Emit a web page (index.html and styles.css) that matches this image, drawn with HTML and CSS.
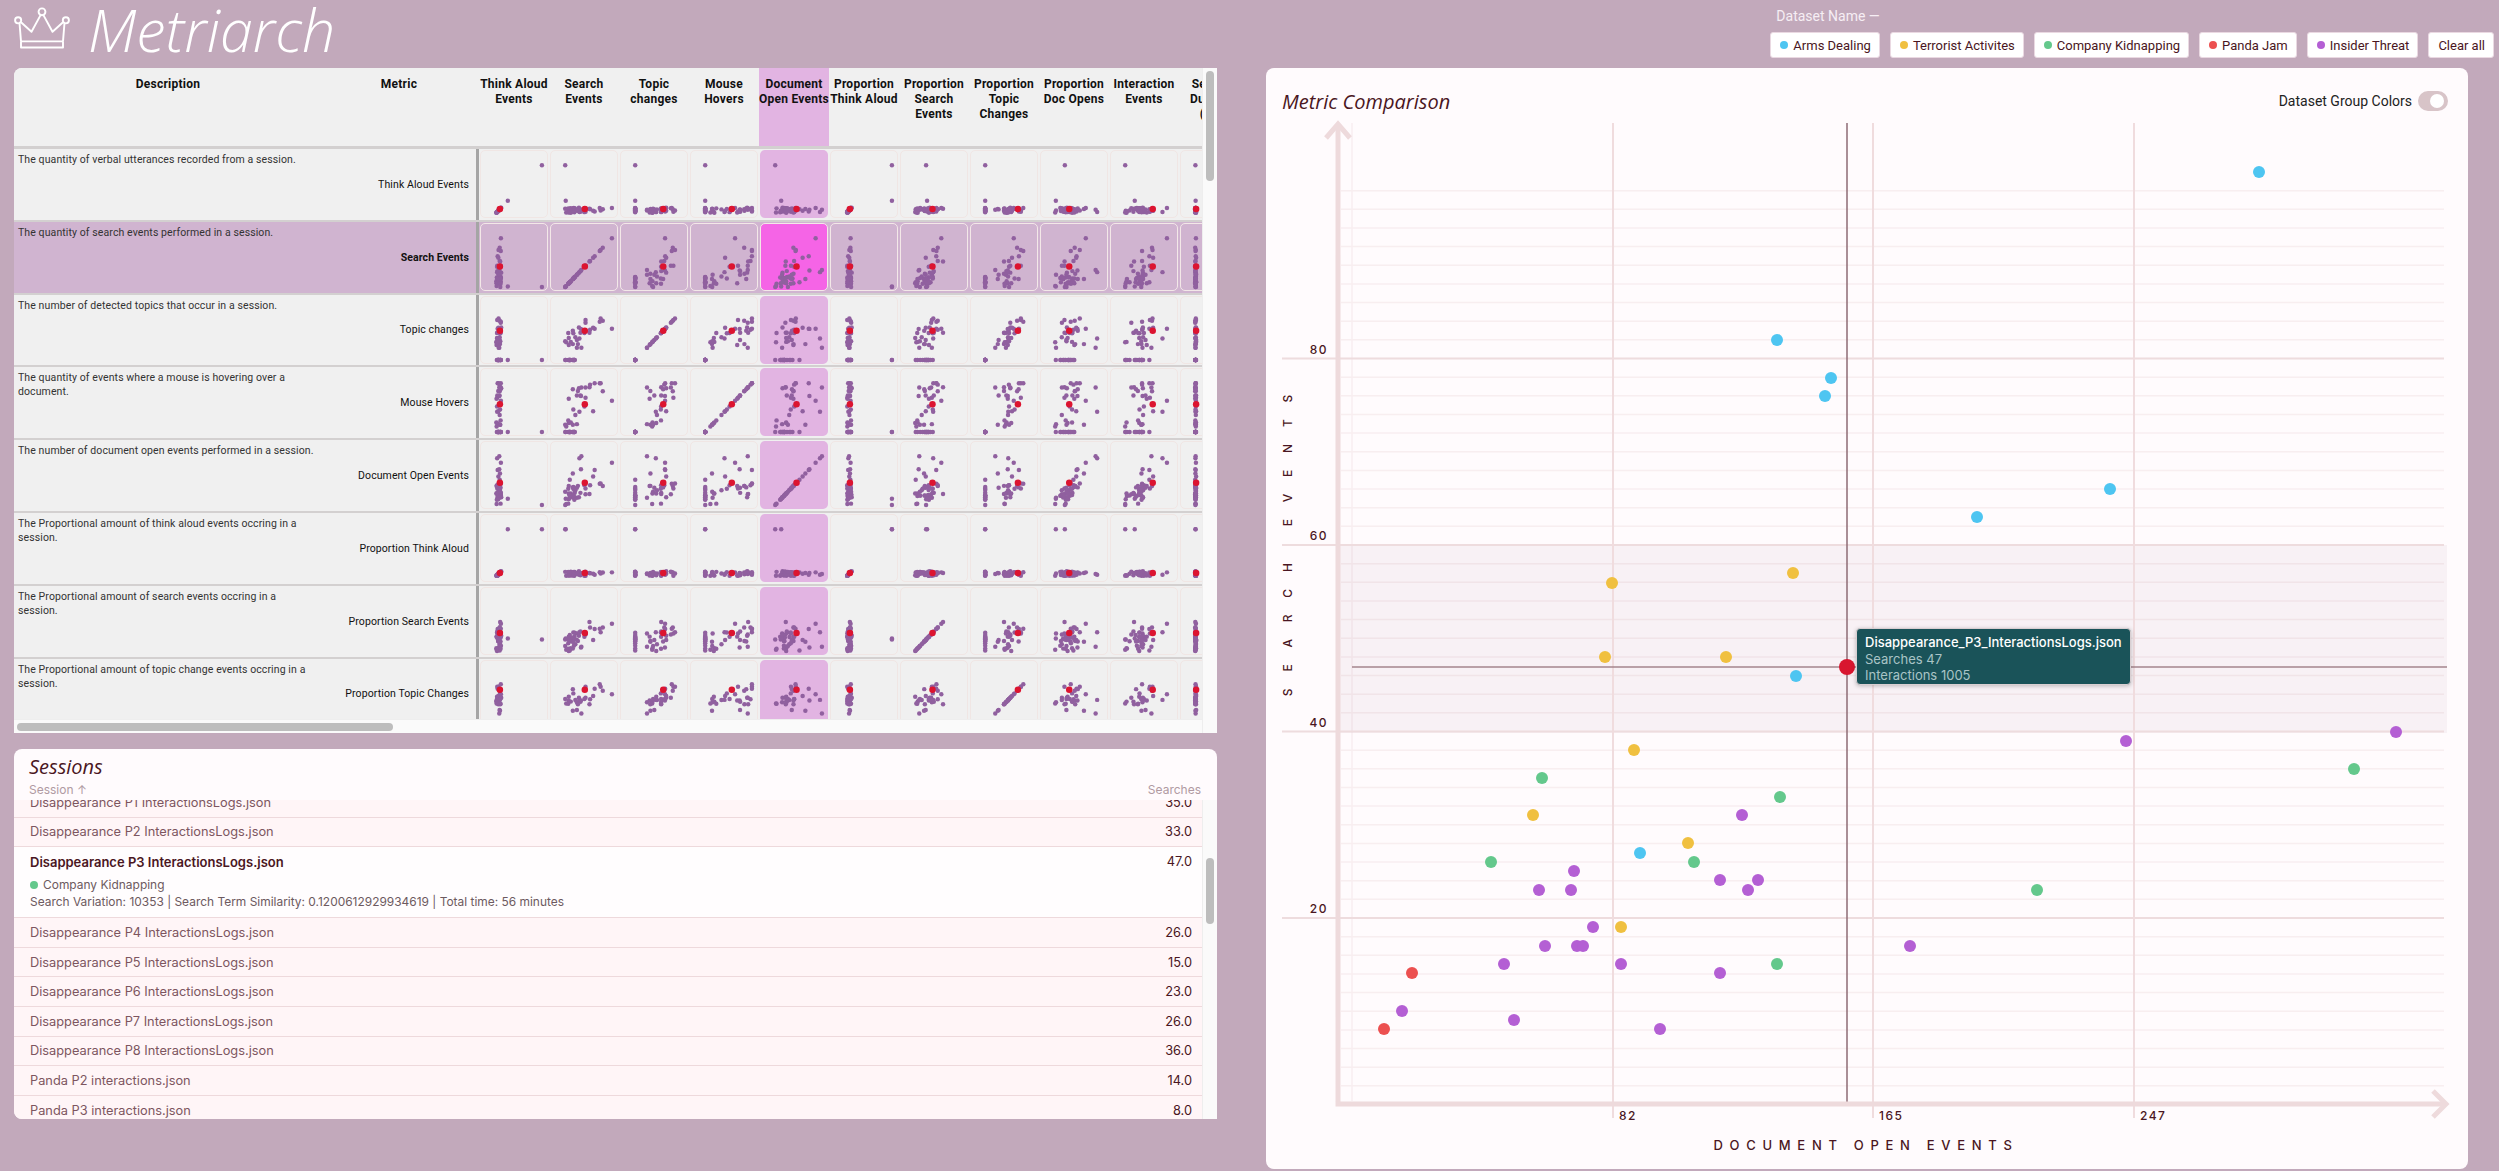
FILE: index.html
```html
<!DOCTYPE html>
<html lang="en">
<head>
    <meta charset="UTF-8">
    <title>Metriarch</title>
    <link rel="stylesheet" href="styles.css">
</head>
<body>
    <header class="top-bar">
        <div class="brand">
            <svg class="crown" viewBox="0 0 60 44" fill="none" stroke="#fff" stroke-width="2" stroke-linejoin="round">
                <circle cx="30" cy="5" r="3.6"/>
                <circle cx="5" cy="14" r="3.2"/>
                <circle cx="55" cy="14" r="3.2"/>
                <path d="M8 36 L6.5 17.5 M52 36 L53.5 17.5 M8 16 L19 26 L28.5 8.5 M31.5 8.5 L41 26 L52 16"/>
                <path d="M8 36 H52 M8 36 V42.5 H52 V36"/>
            </svg>
            <span class="brand-name">Metriarch</span>
        </div>
        <div class="datasets">
            <div class="datasets-label">Dataset Name —</div>
            <div class="chips">
                <div class="chip"><i class="dot blue"></i>Arms Dealing</div>
                <div class="chip"><i class="dot yellow"></i>Terrorist Activites</div>
                <div class="chip"><i class="dot green"></i>Company Kidnapping</div>
                <div class="chip"><i class="dot red"></i>Panda Jam</div>
                <div class="chip"><i class="dot purple"></i>Insider Threat</div>
                <div class="chip">Clear all</div>
            </div>
        </div>
    </header>

    <main class="layout">
        <div class="left-col">
            <section class="card matrix-card">
                <div class="matrix" id="matrix"></div>
                <div class="track vtrack"><div class="thumb matrix-vthumb"></div></div>
                <div class="track htrack"><div class="thumb matrix-hthumb"></div></div>
            </section>

            <section class="card sessions-card">
                <div class="sessions-head">
                    <h2 class="panel-title">Sessions</h2>
                    <div class="sessions-cols"><span>Session ↑</span><span>Searches</span></div>
                </div>
                <div class="sessions-body">
                    <div class="session-list">
                        <div class="session-row"><span>Disappearance P1 InteractionsLogs.json</span><span class="num">35.0</span></div>
                        <div class="session-row"><span>Disappearance P2 InteractionsLogs.json</span><span class="num">33.0</span></div>
                        <div class="session-row open">
                            <div class="session-detail">
                                <div class="session-name">Disappearance P3 InteractionsLogs.json</div>
                                <div class="session-group"><i class="dot green"></i>Company Kidnapping</div>
                                <div>Search Variation: 10353 | Search Term Similarity: 0.1200612929934619 | Total time: 56 minutes</div>
                            </div>
                            <span class="num">47.0</span>
                        </div>
                        <div class="session-row"><span>Disappearance P4 InteractionsLogs.json</span><span class="num">26.0</span></div>
                        <div class="session-row"><span>Disappearance P5 InteractionsLogs.json</span><span class="num">15.0</span></div>
                        <div class="session-row"><span>Disappearance P6 InteractionsLogs.json</span><span class="num">23.0</span></div>
                        <div class="session-row"><span>Disappearance P7 InteractionsLogs.json</span><span class="num">26.0</span></div>
                        <div class="session-row"><span>Disappearance P8 InteractionsLogs.json</span><span class="num">36.0</span></div>
                        <div class="session-row"><span>Panda P2 interactions.json</span><span class="num">14.0</span></div>
                        <div class="session-row"><span>Panda P3 interactions.json</span><span class="num">8.0</span></div>
                    </div>
                    <div class="track sessions-track"><div class="thumb sessions-thumb"></div></div>
                </div>
            </section>
        </div>

        <section class="card chart-card">
            <div class="chart-head">
                <h2 class="panel-title">Metric Comparison</h2>
                <div class="group-toggle">Dataset Group Colors<span class="switch"><span class="knob"></span></span></div>
            </div>
            <svg class="big-chart" id="bigChart" viewBox="1266 120 1202 1049"></svg>
            <div class="chart-tip">
                <div class="tip-title">Disappearance_P3_InteractionsLogs.json</div>
                <div>Searches 47</div>
                <div>Interactions 1005</div>
            </div>
        </section>
    </main>

    <script src="charts.js"></script>
</body>
</html>
```

FILE: styles.css
```css
* {
    box-sizing: border-box;
}
body {
    margin: 0;
    height: 1171px;
    overflow: hidden;
    background-color: #c2a9bb;
    font-family: Inter, "Liberation Sans", sans-serif;
    color: #4a1622;
}
.top-bar {
    height: 68px;
    display: flex;
    justify-content: space-between;
    padding: 0 5px 0 13px;
}
.brand {
    display: flex;
    align-items: flex-start;
}
.crown {
    width: 58px;
    height: 42px;
    margin-top: 7px;
}
.brand-name {
    margin-left: 17px;
    font-family: "Open Sans", sans-serif;
    font-weight: 300;
    font-style: italic;
    font-size: 59px;
    line-height: 58px;
    color: #fff;
}
.datasets-label {
    margin: 8px 0 8px 6px;
    font-family: Roboto, sans-serif;
    font-size: 14px;
    line-height: 16px;
    color: #f6eef4;
}
.chips {
    display: flex;
    gap: 10px;
}
.chip {
    height: 26px;
    display: flex;
    align-items: center;
    padding: 0 8px 0 9px;
    background: #fff;
    border: 1px solid #ead9e2;
    border-radius: 3px;
    font-family: Roboto, sans-serif;
    font-size: 13px;
}
.dot {
    display: inline-block;
    width: 8px;
    height: 8px;
    border-radius: 50%;
    margin-right: 5px;
}
.blue { background: #4ec5f1; }
.yellow { background: #f0c040; }
.green { background: #64c88c; }
.red { background: #ec5050; }
.purple { background: #b45fd4; }

.layout {
    display: grid;
    grid-template-columns: 1203px 1202px;
    gap: 49px;
    padding-left: 14px;
}
.left-col {
    display: flex;
    flex-direction: column;
    gap: 16px;
}
.card {
    background: #fffbfd;
    border-radius: 8px 8px 0 8px;
    overflow: hidden;
}
.panel-title {
    margin: 0;
    font-family: "Open Sans", sans-serif;
    font-weight: 400;
    font-style: italic;
    font-size: 20px;
    color: #4a1622;
}

/* scatter matrix */
.matrix-card {
    height: 665px;
    display: grid;
    grid-template-columns: 1188px 15px;
    grid-template-rows: 651px 14px;
    border-radius: 8px 0 0 0;
    background: #fafafa;
}
.matrix {
    overflow: hidden;
    background: #f0f0f0;
}
.matrix-row {
    display: grid;
    grid-template-columns: 308px 154px 3px repeat(11, 70px);
    height: 72.8px;
    border-bottom: 2px solid #d3d0d0;
    font-family: Roboto, sans-serif;
    font-size: 10.5px;
    letter-spacing: 0.1px;
    color: #333;
}
.matrix-head {
    height: 81px;
    border-bottom: 3px solid #d3d0d0;
    font-size: 12px;
    letter-spacing: 0.25px;
    font-weight: 700;
    color: #111;
    text-align: center;
    line-height: 15px;
}
.head-cell {
    padding-top: 9px;
}
.head-cell.active {
    background: #e2b4e2;
}
.row-desc {
    padding: 4px;
    line-height: 14px;
}
.row-name {
    padding-right: 7px;
    text-align: right;
    align-self: center;
    color: #111;
}
.row-bar {
    background: #a5a5a5;
}
.matrix-row.selected {
    background: #d0b4d0;
}
.matrix-row.selected .row-name {
    font-weight: 700;
}
.plot {
    margin: 1px;
    height: 68px;
    border: 1.5px solid #f0e6e4;
    border-radius: 5px;
}
.plot svg {
    display: block;
    width: 100%;
    height: 100%;
}
.selected .plot {
    border-color: #f3e8e8;
}
.plot.active {
    background: #e2b4e2;
    border-color: transparent;
}
.selected .plot.active {
    background: #f564e6;
    border-color: #f3e8e8;
}

.track {
    background: #fafafa;
    position: relative;
}
.vtrack {
    grid-row: 1 / span 2;
    grid-column: 2;
    border-left: 1px solid #eee;
}
.htrack {
    border-top: 1px solid #eee;
}
.thumb {
    position: absolute;
    background: #bdbdbd;
    border-radius: 4px;
}
.matrix-vthumb {
    left: 3px;
    top: 3px;
    width: 8px;
    height: 110px;
}
.matrix-hthumb {
    left: 3px;
    top: 3px;
    width: 376px;
    height: 8px;
}

/* sessions list */
.sessions-card {
    height: 370px;
    border-radius: 8px 8px 0 8px;
}
.sessions-head {
    height: 51px;
    padding: 4px 16px 0 15px;
}
.sessions-cols {
    display: flex;
    justify-content: space-between;
    font-size: 12px;
    line-height: 15px;
    color: #b09aa2;
    margin-top: 2px;
}
.sessions-body {
    height: 319px;
    display: grid;
    grid-template-columns: 1188px 15px;
    overflow: hidden;
}
.session-list {
    margin-top: -12px;
    background: #fff5f7;
    font-size: 12.8px;
    color: #7d5560;
}
.session-row {
    min-height: 29.6px;
    display: flex;
    justify-content: space-between;
    align-items: center;
    padding: 0 10px 0 16px;
    border-bottom: 1px solid #eed9dc;
}
.num {
    color: #4a1622;
}
.session-row.open {
    min-height: 71px;
    align-items: flex-start;
    padding-top: 6px;
    background: #fffdfe;
    font-size: 11.95px;
    line-height: 17px;
    color: #6d5a60;
}
.session-row.open .num {
    font-size: 12.8px;
    line-height: 18px;
}
.session-name {
    font-size: 13px;
    font-weight: 600;
    line-height: 18px;
    color: #4a1622;
    margin-bottom: 5px;
}
.session-group {
    display: flex;
    align-items: center;
}
.sessions-track {
    border-left: 1px solid #eee;
}
.sessions-thumb {
    left: 3px;
    top: 58px;
    width: 8px;
    height: 66px;
}

/* big scatter */
.chart-card {
    position: relative;
    height: 1101px;
    border-radius: 8px;
}
.chart-head {
    height: 52px;
    display: flex;
    justify-content: space-between;
    align-items: flex-start;
    padding: 20px 20px 0 16px;
}
.group-toggle {
    display: flex;
    align-items: center;
    font-family: Roboto, sans-serif;
    font-size: 14px;
    color: #222;
    gap: 6px;
    margin-top: 3px;
}
.switch {
    width: 30px;
    height: 20px;
    border-radius: 10px;
    background: #d8c4c8;
    display: flex;
    justify-content: flex-end;
    align-items: center;
    padding-right: 4px;
}
.knob {
    width: 14px;
    height: 14px;
    border-radius: 50%;
    background: #fff;
}
.big-chart {
    display: block;
    width: 1202px;
    height: 1049px;
}
.big-chart text {
    font-family: Inter, "Liberation Sans", sans-serif;
    fill: #4a1622;
    font-size: 12px;
    font-weight: 500;
}
.big-chart .tick {
    letter-spacing: 1.5px;
}
.big-chart .axis-x {
    letter-spacing: 6.7px;
    font-size: 13px;
}
.big-chart .axis-y {
    letter-spacing: 16.8px;
}
.chart-tip {
    position: absolute;
    left: 590px;
    top: 560px;
    width: 275px;
    height: 57px;
    padding: 4px 8px;
    background: #1a5359;
    border: 1px solid #d9cfd2;
    border-radius: 4px;
    box-shadow: 0 1px 4px rgba(0,0,0,0.25);
    font-size: 13px;
    line-height: 16px;
    color: #a9c4c6;
}
.tip-title {
    font-size: 13px;
    font-weight: 500;
    line-height: 18px;
    color: #fff;
}
```

FILE: charts.js
```js
// session positions on the big chart, in page pixels
const groups = {
    '#4ec5f1': [[2259,172],[1777,340],[1831,378],[1825,396],[2110,489],[1977,517],[1796,676],[1640,853]],
    '#f0c040': [[1793,573],[1612,583],[1726,657],[1605,657],[1634,750],[1533,815],[1688,843],[1621,927]],
    '#64c88c': [[1542,778],[1780,797],[2354,769],[1491,862],[1694,862],[2037,890],[1777,964]],
    '#b45fd4': [[2126,741],[2396,732],[1742,815],[1574,871],[1539,890],[1571,890],[1720,880],[1758,880],[1748,890],
                [1593,927],[1545,946],[1577,946],[1583,946],[1910,946],[1504,964],[1621,964],[1720,973],[1402,1011],[1514,1020],[1660,1029]],
    '#ec5050': [[1412,973],[1384,1029]]
};

const metrics = [
    { key: 'think', name: 'Think Aloud Events', desc: 'The quantity of verbal utterances recorded from a session.' },
    { key: 'search', name: 'Search Events', desc: 'The quantity of search events performed in a session.' },
    { key: 'topic', name: 'Topic changes', desc: 'The number of detected topics that occur in a session.' },
    { key: 'mouse', name: 'Mouse Hovers', desc: 'The quantity of events where a mouse is hovering over a document.' },
    { key: 'doc', name: 'Document Open Events', desc: 'The number of document open events performed in a session.' },
    { key: 'pthink', name: 'Proportion Think Aloud', desc: 'The Proportional amount of think aloud events occring in a session.' },
    { key: 'psearch', name: 'Proportion Search Events', desc: 'The Proportional amount of search events occring in a session.' },
    { key: 'ptopic', name: 'Proportion Topic Changes', desc: 'The Proportional amount of topic change events occring in a session.' },
    { key: 'pdoc', name: 'Proportion Doc Opens' },
    { key: 'inter', name: 'Interaction Events' },
    { key: 'dur', name: 'Session Duration (sec)' }
];

let seed = 7;
function rnd() {
    seed = (seed * 16807) % 2147483647;
    return seed / 2147483647;
}
function clamp(v) {
    return Math.max(0, Math.min(1, v));
}
function noise(a) {
    return (rnd() - 0.5) * 2 * a;
}

// the other metrics only follow the two plotted ones loosely
function makeSession(x, y) {
    const doc = (x - 1384) / 1012;
    const search = (1029 - y) / 857;
    const none = search < 0.25 && rnd() < 0.65;
    const topic = none ? 0 : clamp(0.3 + 0.6 * search + noise(0.26));
    const think = 0.02 + rnd() * 0.11;
    return {
        doc, search, topic, think,
        mouse: none ? 0 : clamp(0.45 + 0.35 * search + noise(0.38)),
        pthink: clamp(think * 0.9 + rnd() * 0.03),
        psearch: clamp(0.1 + 0.9 * search / (doc + 0.45) * 0.55 + noise(0.18)),
        ptopic: none ? 0 : clamp(0.12 + 0.75 * topic + noise(0.16)),
        pdoc: clamp(0.06 + 0.75 * doc + noise(0.16)),
        inter: clamp(0.06 + 0.5 * doc + 0.3 * search + noise(0.2)),
        dur: 0.02 * rnd()
    };
}

const sessions = [];
Object.keys(groups).forEach(function(color) {
    groups[color].forEach(function(p) {
        sessions.push(makeSession(p[0], p[1]));
    });
});
// the two outliers on think aloud
Object.assign(sessions[sessions.length - 1], { think: 1, pthink: 1 });
Object.assign(sessions[sessions.length - 4], { think: 0.27, pthink: 1 });

const current = { doc: 0.457, search: 0.42, topic: 0.6, think: 0.1, mouse: 0.57, pthink: 0.1,
    psearch: 0.37, ptopic: 0.7, pdoc: 0.3, inter: 0.59, dur: 0.02 };

function plotMarkup(colKey, rowKey) {
    const px = t => (14 + 46 * t).toFixed(1);
    const py = t => (62 - 48 * t).toFixed(1);
    let dots = '';
    sessions.forEach(function(s) {
        dots += `<circle cx="${px(s[colKey])}" cy="${py(s[rowKey])}" r="2.2" fill="#90609f"/>`;
    });
    dots += `<circle cx="${px(current[colKey])}" cy="${py(current[rowKey])}" r="3.2" fill="#dc1430"/>`;
    return `<svg viewBox="0 0 65 65">${dots}</svg>`;
}

function buildMatrix() {
    let html = '<div class="matrix-row matrix-head"><div class="head-cell">Description</div><div class="head-cell">Metric</div><div></div>';
    metrics.forEach(function(m) {
        html += `<div class="head-cell${m.key === 'doc' ? ' active' : ''}">${m.name}</div>`;
    });
    html += '</div>';

    metrics.slice(0, 8).forEach(function(row) {
        html += `<div class="matrix-row${row.key === 'search' ? ' selected' : ''}">`;
        html += `<div class="row-desc">${row.desc}</div><div class="row-name">${row.name}</div><div class="row-bar"></div>`;
        metrics.forEach(function(col) {
            html += `<div class="plot${col.key === 'doc' ? ' active' : ''}">${plotMarkup(col.key, row.key)}</div>`;
        });
        html += '</div>';
    });
    document.getElementById('matrix').innerHTML = html;
}

function buildBigChart() {
    const svg = document.getElementById('bigChart');
    const yOf = v => 1104.5 - 9.325 * v;
    let out = '';

    // minor lines
    for (let v = 2; v <= 98; v += 2) {
        if (v % 20 !== 0) {
            out += `<line x1="1341" x2="2444" y1="${yOf(v)}" y2="${yOf(v)}" stroke="#f8eef0" stroke-width="1.5"/>`;
        }
    }
    out += '<line x1="1352" x2="1352" y1="123" y2="1101" stroke="#f8eef0" stroke-width="1.5"/>';

    // highlighted band sits over the lines
    out += '<rect x="1338" y="545" width="1109" height="188" fill="#6e3c5a" fill-opacity="0.05"/>';

    [80, 60, 40, 20].forEach(function(v) {
        out += `<line x1="1282" x2="2444" y1="${yOf(v)}" y2="${yOf(v)}" stroke="#eedcde" stroke-width="2"/>`;
        out += `<text class="tick" x="1328" y="${yOf(v) - 5}" text-anchor="end">${v}</text>`;
    });
    [[1613, 82], [1873, 165], [2134, 247]].forEach(function(t) {
        out += `<line x1="${t[0]}" x2="${t[0]}" y1="123" y2="1118" stroke="#f0dcde" stroke-width="2"/>`;
        out += `<text class="tick" x="${t[0] + 6}" y="1120">${t[1]}</text>`;
    });

    // crosshair
    out += '<line x1="1847" x2="1847" y1="123" y2="1104" stroke="#8e6b75" stroke-width="1.5"/>';
    out += '<line x1="1352" x2="2447" y1="667" y2="667" stroke="#a5848c" stroke-width="1.5"/>';

    // axes
    out += '<path d="M1338 124 V1104 H2445" fill="none" stroke="#eedadc" stroke-width="5"/>';
    out += '<path d="M1326 138 L1338 124 L1350 138 M2433 1091 L2446 1104 L2433 1117" fill="none" stroke="#eedadc" stroke-width="5"/>';

    Object.keys(groups).forEach(function(color) {
        groups[color].forEach(function(p) {
            out += `<circle cx="${p[0]}" cy="${p[1]}" r="6" fill="${color}"/>`;
        });
    });
    out += '<circle cx="1847" cy="667" r="8" fill="#d8162f"/>';

    out += '<text class="axis-x" x="1866" y="1150" text-anchor="middle">DOCUMENT OPEN EVENTS</text>';
    out += '<text class="axis-y" text-anchor="middle" transform="translate(1292 537) rotate(-90)">SEARCH EVENTS</text>';
    svg.innerHTML = out;
}

buildMatrix();
buildBigChart();
```
